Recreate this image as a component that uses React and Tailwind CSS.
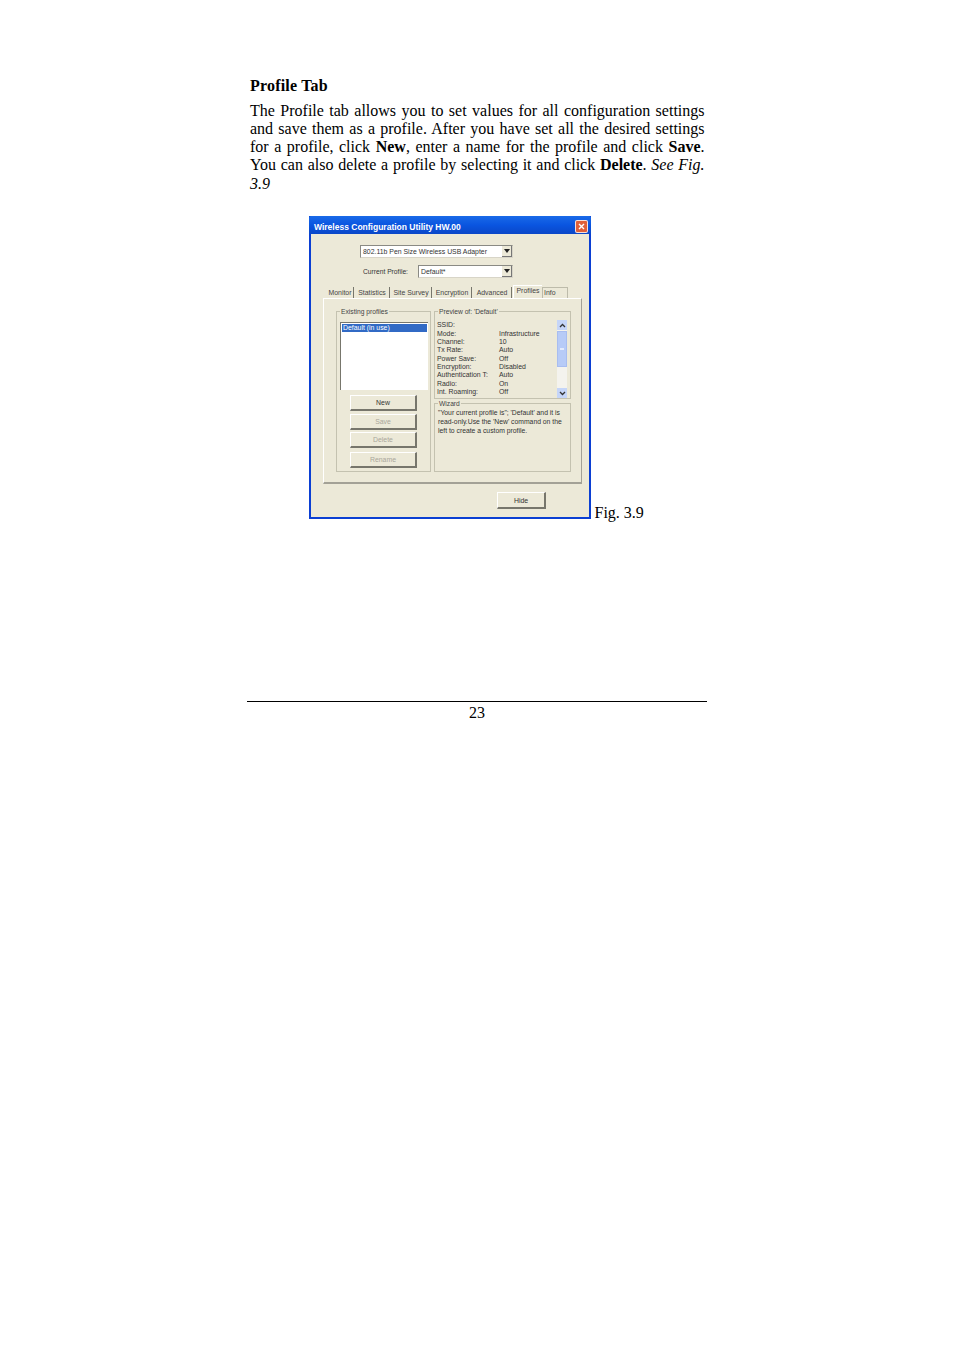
const ui = { fontFamily: '"Liberation Sans", Arial, sans-serif' };

const preview = [
  ["SSID:", ""],
  ["Mode:", "Infrastructure"],
  ["Channel:", "10"],
  ["Tx Rate:", "Auto"],
  ["Power Save:", "Off"],
  ["Encryption:", "Disabled"],
  ["Authentication T:", "Auto"],
  ["Radio:", "On"],
  ["Int. Roaming:", "Off"],
];

const tabs = [
  ["Monitor", "w-[27px]"],
  ["Statistics", "w-[35px]"],
  ["Site Survey", "w-[41px]"],
  ["Encryption", "w-[39px]"],
  ["Advanced", "w-[39px]"],
];

function Arrow({ up }) {
  return (
    <svg width="7" height="5" viewBox="0 0 7 5" className={up ? "rotate-180" : ""}>
      <path d="M1 1l2.5 2.5L6 1" fill="none" stroke="#333" strokeWidth="1.3" />
    </svg>
  );
}

function Select({ label, className }) {
  return (
    <div className={`h-[13px] bg-white border border-[#8a8a84] border-b-[#d8d5c8] border-r-[#d8d5c8] flex items-center justify-between pl-[2px] text-[6.9px] text-[#333] ${className}`}>
      <span className="whitespace-nowrap">{label}</span>
      <div className="w-[10px] h-[11px] bg-[#ece9d8] border-r border-b border-[#777] flex items-center justify-center">
        <svg width="6" height="4" viewBox="0 0 6 4"><path d="M0 0h6L3 4z" fill="#222" /></svg>
      </div>
    </div>
  );
}

function Btn({ children, disabled, className = "" }) {
  return (
    <div className={`h-[16px] pt-px bg-[#ece9d8] border border-white border-r-[#77766c] border-b-[#77766c] border-r-2 border-b-2 flex items-center justify-center text-[6.9px] ${disabled ? "text-[#aaa79b]" : "text-[#333]"} ${className}`}>
      {children}
    </div>
  );
}

function Group({ title, className, children }) {
  return (
    <div className={`relative border border-[#c4c2b0] ${className}`}>
      <span className="absolute left-[3px] -top-[5px] bg-[#ece9d8] px-[1px] text-[6.7px] leading-[10px] text-[#444] whitespace-nowrap">{title}</span>
      {children}
    </div>
  );
}

function Dialog() {
  return (
    <div className="w-[282px] h-[303px] flex flex-col border-2 border-t-0 border-[#0b3fd3] bg-[#ece9d8] shrink-0" style={ui}>
      <div className="h-[18px] -mx-[2px] pl-[5px] pr-[3px] pt-[2px] bg-gradient-to-b from-[#1a6ae8] via-[#0a55e0] to-[#0a47c8] flex items-center justify-between rounded-t-[2px]">
        <span className="pt-px text-white font-bold text-[8.5px] whitespace-nowrap">Wireless Configuration Utility HW.00</span>
        <div className="w-[13px] h-[13px] bg-[#e0603a] border border-white/80 rounded-[2px] flex items-center justify-center">
          <svg width="7" height="7" viewBox="0 0 7 7"><path d="M1 1l5 5M6 1L1 6" stroke="#fff" strokeWidth="1.4" /></svg>
        </div>
      </div>

      <div className="ml-[49px] mt-[11px] w-[153px]">
        <Select label="802.11b Pen Size Wireless USB Adapter" className="w-full" />
      </div>
      <div className="ml-[52px] mt-[7px] flex items-center">
        <span className="w-[55px] text-[6.7px] text-[#333] whitespace-nowrap">Current Profile:</span>
        <Select label="Default*" className="w-[95px]" />
      </div>

      <div className="ml-[16px] mt-[7px] h-[13px] flex items-end text-[6.9px] text-[#444]">
        {tabs.map(([name, w]) => (
          <div key={name} className={`${w} h-[11px] mr-[1px] border-r border-[#77766c] flex items-center justify-center whitespace-nowrap`}>{name}</div>
        ))}
        <div className="w-[29px] h-[13px] bg-[#ece9d8] border-t border-l border-white flex items-start justify-center whitespace-nowrap">Profiles</div>
        <div className="w-[26px] h-[11px] border-l border-t border-r border-[#bdbbaa] pl-[1px] flex items-center whitespace-nowrap">Info</div>
      </div>

      <div className="ml-[12px] w-[259px] h-[186px] border border-white border-r-[#a3a196] border-b-[#a3a196] border-b-2 pl-[12px] pt-[12px] flex gap-[3px]">
        <Group title="Existing profiles" className="w-[95px] h-[161px] px-[3px] pt-[10px]">
          <div className="h-[68px] w-[88px] bg-white border-l border-t border-[#77766c] p-[1px]">
            <div className="h-[8px] bg-[#316ac5] text-white text-[6.9px] leading-[7px] pl-[1px]">Default (in use)</div>
          </div>
          <div className="ml-[10px] mt-[5px] w-[67px] flex flex-col">
            <Btn>New</Btn>
            <Btn disabled className="mt-[3px]">Save</Btn>
            <Btn disabled className="mt-[2px]">Delete</Btn>
            <Btn disabled className="mt-[4px]">Rename</Btn>
          </div>
        </Group>

        <div className="w-[137px] flex flex-col gap-[4px]">
          <Group title="Preview of: 'Default'" className="h-[88px] pl-[2px] pt-[9px] flex">
            <div className="w-[120px] text-[6.9px] leading-[8.3px] text-[#333]">
              {preview.map(([k, v]) => (
                <div key={k} className="h-[8.3px] grid grid-cols-[62px_1fr] whitespace-nowrap">
                  <span>{k}</span>
                  <span>{v}</span>
                </div>
              ))}
            </div>
            <div className="w-[10px] -mt-px h-[78px] flex flex-col bg-[#f4f3ee]">
              <div className="h-[10px] bg-[#c5d5f8] flex items-center justify-center"><Arrow up /></div>
              <div className="h-[36px] mt-[1px] bg-[#b7cbf7] border border-[#a8bdf0] flex items-center justify-center">
                <div className="w-[4px] h-[2px] bg-[#e3ebfd]" />
              </div>
              <div className="flex-1" />
              <div className="h-[10px] bg-[#c5d5f8] flex items-center justify-center"><Arrow /></div>
            </div>
          </Group>
          <Group title="Wizard" className="h-[69px] pl-[3px] pr-[4px] pt-[5px]">
            <p className="text-[6.8px] leading-[8.6px] text-[#333]">"Your current profile is"; 'Default' and it is read-only.Use the 'New' command on the left to create a custom profile.</p>
          </Group>
        </div>
      </div>

      <div className="ml-[186px] mt-[8px] w-[49px]">
        <Btn className="h-[17px]">Hide</Btn>
      </div>
    </div>
  );
}

export default function App() {
  return (
    <div className="w-[954px] h-[1351px] bg-white text-black pt-[77px]" style={{ fontFamily: '"Liberation Serif", "Times New Roman", serif' }}>
      <div className="ml-[250px] w-[454.5px]">
        <h2 className="font-bold text-[16px] leading-[18px] tracking-[0.2px]">Profile Tab</h2>
        <p className="mt-[6.5px] text-[16px] leading-[18.3px] text-justify">
          The Profile tab allows you to set values for all configuration settings and save them as a profile. After you have set all the desired settings for a profile, click <b>New</b>, enter a name for the profile and click <b>Save</b>. You can also delete a profile by selecting it and click <b>Delete</b>. <i>See Fig. 3.9</i>
        </p>
        <div className="mt-[23.5px] ml-[59px] flex items-end">
          <Dialog />
          <span className="ml-[3.5px] text-[16px] leading-[12px] whitespace-nowrap">Fig. 3.9</span>
        </div>
      </div>
      <div className="ml-[247px] mt-[182px] w-[460px] border-t border-black pt-[2px] text-center text-[16px] leading-[18px]">23</div>
    </div>
  );
}
